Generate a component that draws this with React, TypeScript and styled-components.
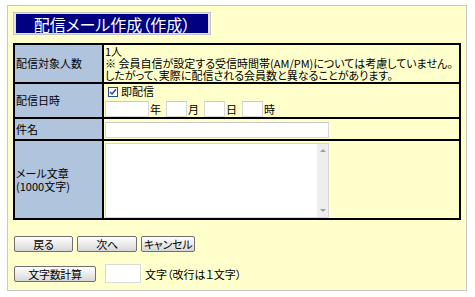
import React from "react";
import styled, { createGlobalStyle } from "styled-components";

const GlobalStyle = createGlobalStyle`
  body {
    margin: 0;
    background: #fff;
    font-family: "Noto Sans CJK JP", "Noto Sans", sans-serif;
    font-size: 11px;
    font-feature-settings: "palt";
    color: #000;
  }
`;

const MailForm: React.FC = () => {
  return (
    <Panel>
      <TitleFrame>
        <TitleBar>配信メール作成（作成）</TitleBar>
      </TitleFrame>
      <FormTable>
        <tbody>
          <tr>
            <Label>配信対象人数</Label>
            <Value>
              <Lines>
                1人
                <br />※ 会員自信が設定する受信時間帯(AM/PM)については考慮していません。
                <br />
                したがって、実際に配信される会員数と異なることがあります。
              </Lines>
            </Value>
          </tr>
          <tr>
            <Label>配信日時</Label>
            <Value>
              <CheckRow>
                <CheckBox>
                  <svg width="8" height="8" viewBox="0 0 8 8">
                    <path d="M1 4 L3 6 L7 1.2" fill="none" stroke="#2a3fb8" strokeWidth="1.5" />
                  </svg>
                </CheckBox>
                即配信
              </CheckRow>
              <DateRow>
                <TextBox w={44} />
                <Unit>年</Unit>
                <TextBox w={21} />
                <Unit>月</Unit>
                <TextBox w={21} />
                <Unit>日</Unit>
                <TextBox w={21} />
                <Unit>時</Unit>
              </DateRow>
            </Value>
          </tr>
          <tr>
            <Label>件名</Label>
            <Value>
              <SubjectRow>
                <TextBox w={224} />
              </SubjectRow>
            </Value>
          </tr>
          <tr>
            <Label>
              メール文章
              <br />
              (1000文字)
            </Label>
            <Value>
              <AreaWrap>
                <BodyArea />
                <ScrollBar>
                  <ArrowUp />
                  <ArrowDown />
                </ScrollBar>
              </AreaWrap>
            </Value>
          </tr>
        </tbody>
      </FormTable>
      <ButtonRow>
        <Button w={59}>戻る</Button>
        <Button w={60}>次へ</Button>
        <Button w={54}>キャンセル</Button>
      </ButtonRow>
      <CountRow>
        <Button w={82}>文字数計算</Button>
        <CountBox />
        <span>文字（改行は１文字）</span>
      </CountRow>
    </Panel>
  );
};

const Panel = styled.div`
  box-sizing: border-box;
  margin: 5px 0 0 7px;
  width: 460px;
  height: 286px;
  border: 1px solid #c8c8c8;
  background: #ffffcc;
  padding: 6px 0 0 5px;
`;

const TitleFrame = styled.div`
  box-sizing: border-box;
  width: 198px;
  height: 23px;
  border: 1px solid #c4c4c4;
  background: #e2e2e2;
  padding: 1px 2px;
`;

const TitleBar = styled.div`
  height: 100%;
  background: #000080;
  color: #fff;
  font-size: 16px;
  display: flex;
  align-items: center;
  justify-content: center;
  line-height: 1;
`;

const FormTable = styled.table`
  margin-top: 8px;
  width: 448px;
  border-collapse: separate;
  border-spacing: 0;
  border: 1px solid #000;
  line-height: 13px;
`;

const Label = styled.td`
  width: 86px;
  background: #b0c4de;
  border: 1px solid #000;
  padding: 0 0 0 1px;
  vertical-align: middle;
  white-space: nowrap;
  line-height: 13px;
`;

const Value = styled.td`
  background: #ffffcc;
  border: 1px solid #000;
  padding: 0 0 0 1px;
  vertical-align: top;
`;

const Lines = styled.div`
  height: 37px;
  line-height: 12px;
  white-space: nowrap;
`;

const CheckRow = styled.div`
  display: flex;
  align-items: center;
  gap: 3px;
  height: 15px;
  padding-left: 3px;
`;

const CheckBox = styled.span`
  box-sizing: border-box;
  width: 10px;
  height: 10px;
  border: 1px solid #1c5180;
  background: #fff;
  display: flex;
  align-items: center;
  justify-content: center;
`;

const DateRow = styled.div`
  display: flex;
  align-items: center;
  height: 18px;
  padding-top: 2px;
  box-sizing: border-box;
`;

const TextBox = styled.input.attrs({ type: "text" })<{ w: number }>`
  box-sizing: border-box;
  width: ${(p) => p.w}px;
  height: 16px;
  margin: 0;
  border: 1px solid #d8d8d8;
  border-top-color: #c8c8c8;
  background: #fff;
  padding: 0;
`;

const Unit = styled.span`
  width: 16px;
  padding-left: 1px;
`;

const SubjectRow = styled.div`
  display: flex;
  height: 20px;
  padding-top: 3px;
  box-sizing: border-box;
`;

const AreaWrap = styled.div`
  box-sizing: border-box;
  display: flex;
  width: 224px;
  height: 75px;
  margin: 2px 0 0;
  border: 1px solid #d8d8d8;
  background: #fff;
`;

const BodyArea = styled.textarea`
  flex: 1;
  border: none;
  margin: 0;
  padding: 0;
  resize: none;
  outline: none;
  background: #fff;
`;

const ScrollBar = styled.div`
  width: 11px;
  background: #eeeeee;
  display: flex;
  flex-direction: column;
  justify-content: space-between;
  align-items: center;
  padding: 5px 0;
`;

const ArrowUp = styled.span`
  width: 0;
  height: 0;
  border-left: 3px solid transparent;
  border-right: 3px solid transparent;
  border-bottom: 3px solid #a0a0a0;
`;

const ArrowDown = styled.span`
  width: 0;
  height: 0;
  border-left: 3px solid transparent;
  border-right: 3px solid transparent;
  border-top: 3px solid #a0a0a0;
`;

const ButtonRow = styled.div`
  display: flex;
  gap: 4px;
  margin: 16px 0 0 1px;
`;

const Button = styled.button<{ w: number }>`
  box-sizing: border-box;
  width: ${(p) => p.w}px;
  height: 16px;
  margin: 0;
  padding: 0;
  border: 1px solid #6f6f6f;
  border-radius: 2px;
  background: linear-gradient(#fefefe, #ececec 50%, #d6d6d6);
  font-family: inherit;
  font-size: 11px;
  font-feature-settings: "palt";
  letter-spacing: -0.3px;
  white-space: nowrap;
  line-height: 14px;
  color: #000;
`;

const CountRow = styled.div`
  display: flex;
  align-items: center;
  margin: 12px 0 0 1px;
`;

const CountBox = styled.input.attrs({ type: "text" })`
  box-sizing: border-box;
  width: 36px;
  height: 19px;
  margin: 0 4px 0 9px;
  padding: 0;
  border: 1px solid #dadada;
  background: #fff;
`;

export default function App() {
  return (
    <>
      <GlobalStyle />
      <MailForm />
    </>
  );
}
